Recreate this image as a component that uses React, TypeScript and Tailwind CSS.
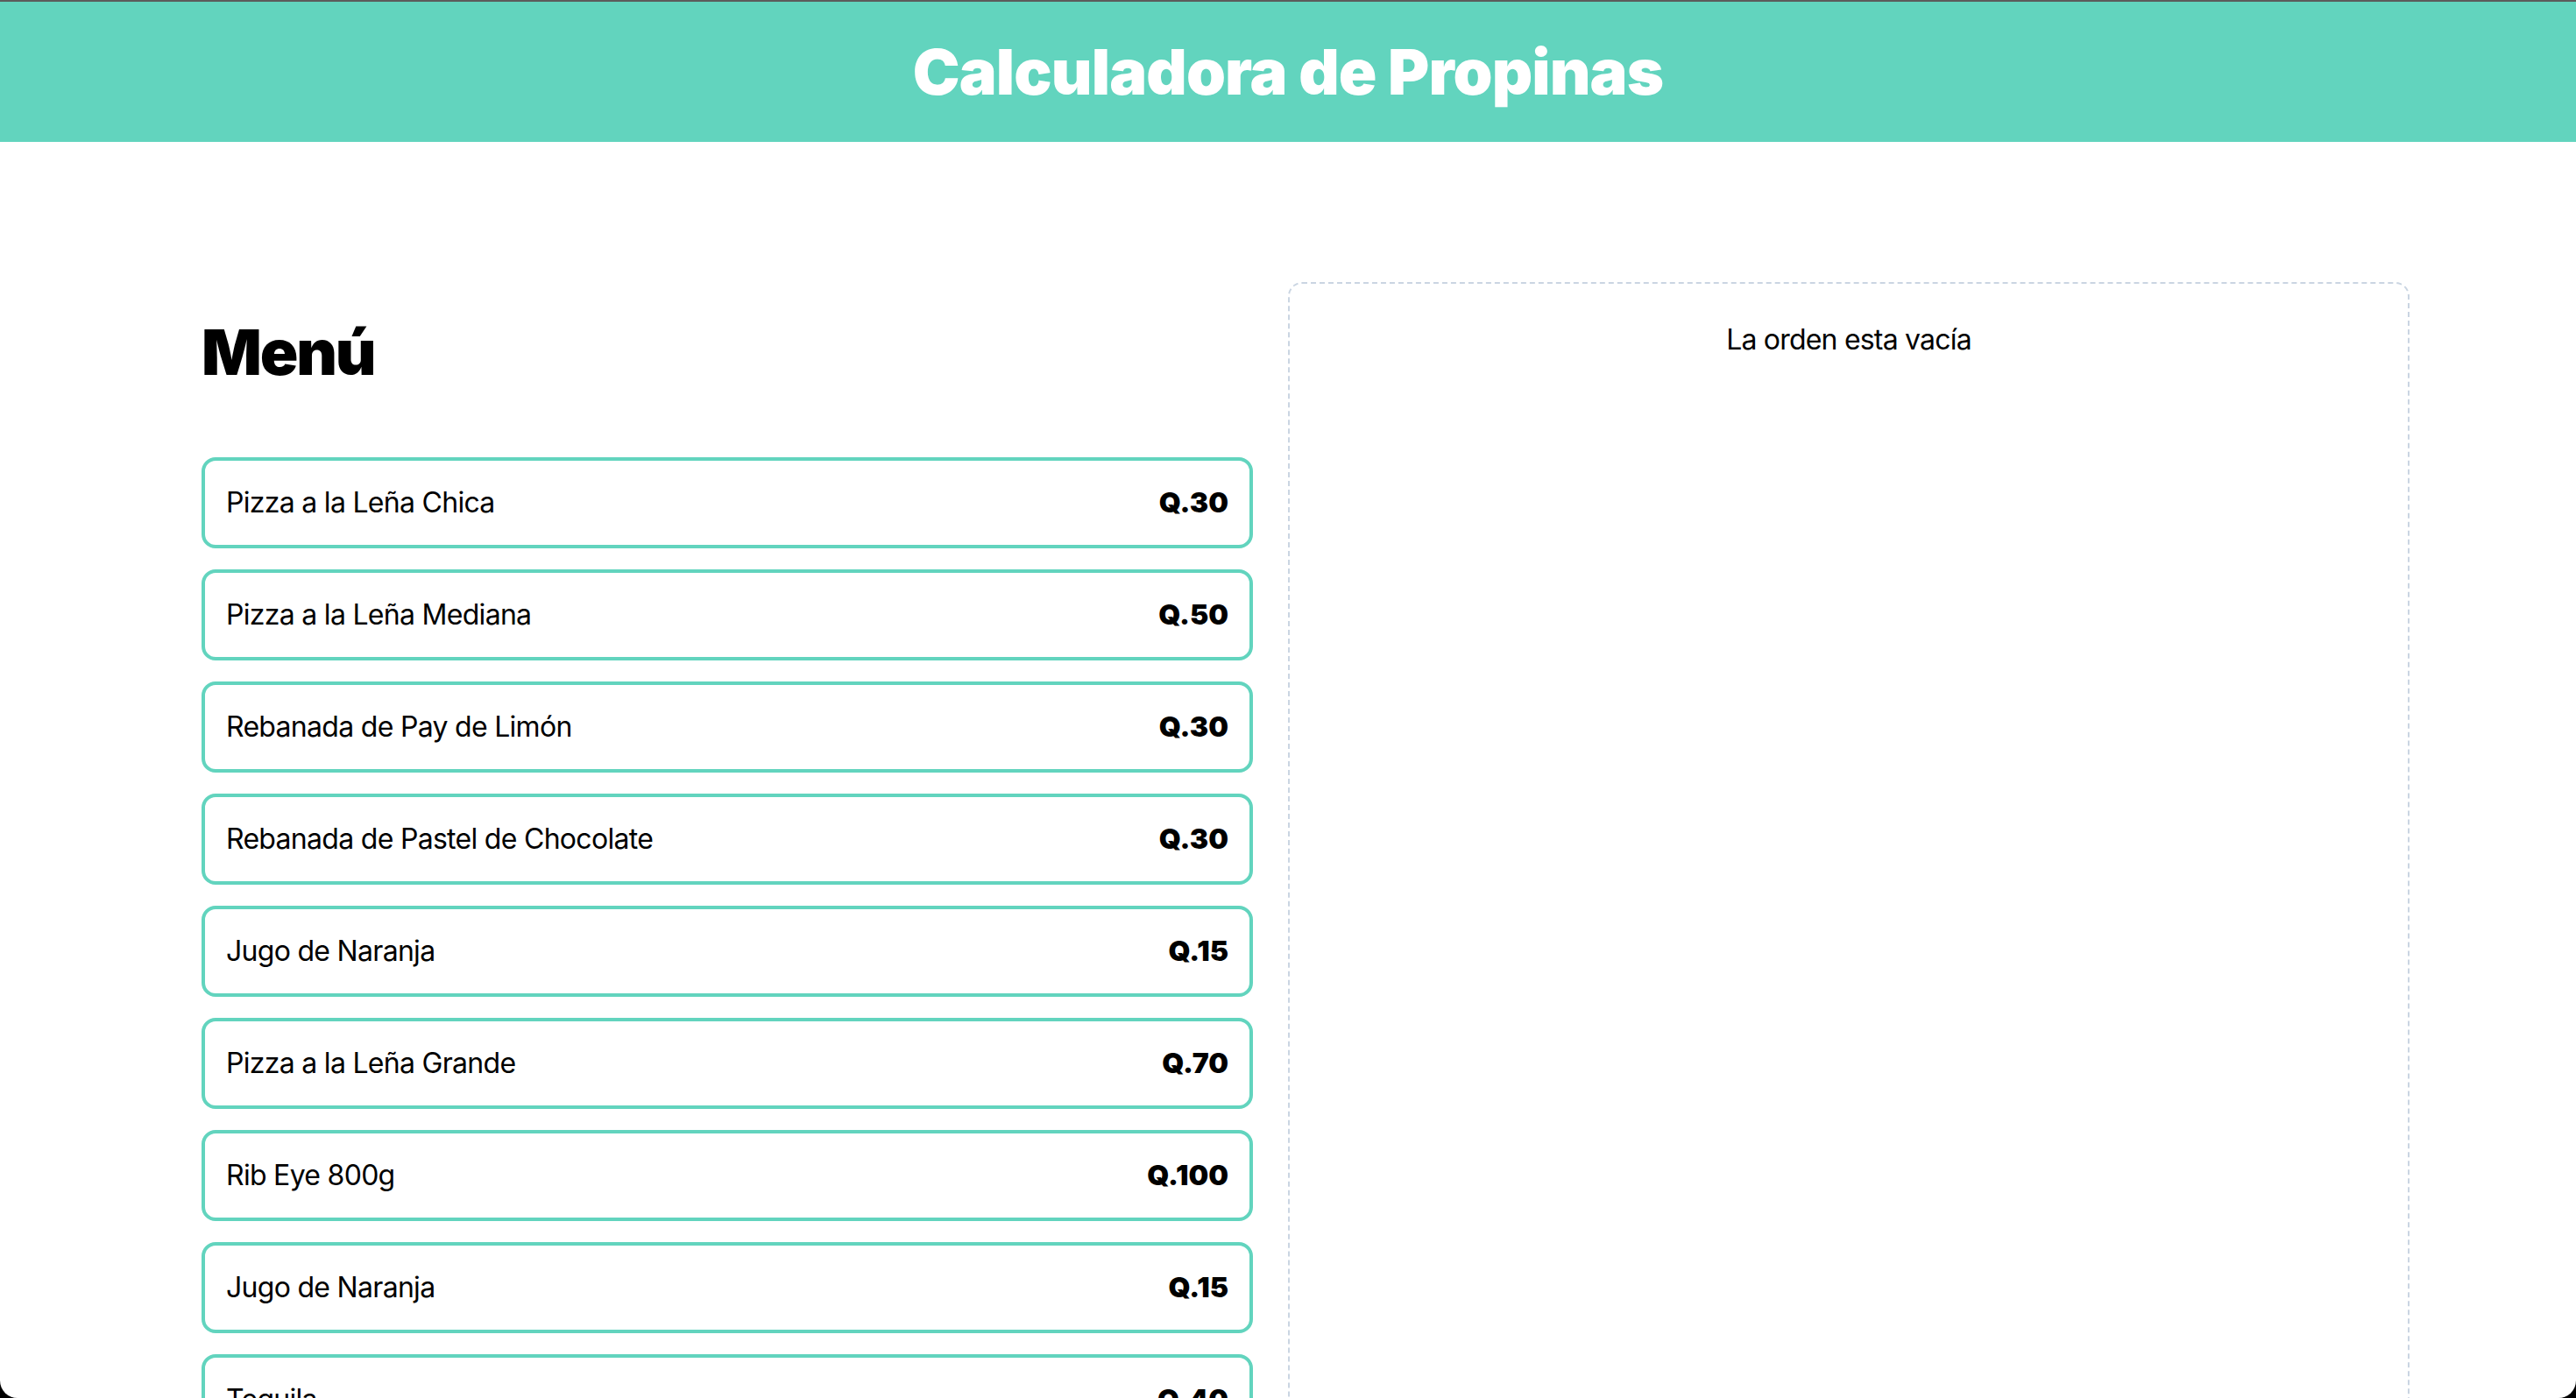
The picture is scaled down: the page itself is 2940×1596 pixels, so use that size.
const menuItems = [
  { id: 1, name: "Pizza a la Leña Chica", price: 30 },
  { id: 2, name: "Pizza a la Leña Mediana", price: 50 },
  { id: 3, name: "Rebanada de Pay de Limón", price: 30 },
  { id: 4, name: "Rebanada de Pastel de Chocolate", price: 30 },
  { id: 5, name: "Jugo de Naranja", price: 15 },
  { id: 6, name: "Pizza a la Leña Grande", price: 70 },
  { id: 7, name: "Rib Eye 800g", price: 100 },
  { id: 8, name: "Jugo de Naranja", price: 15 },
  { id: 9, name: "Tequila", price: 40 },
  { id: 10, name: "Cafe Latte", price: 20 },
];

function MenuItem({ name, price }: { name: string; price: number }) {
  return (
    <button className="w-full flex justify-between items-center border-4 border-[#62d4be] rounded-2xl p-6 text-[32px] leading-[48px] text-black hover:bg-[#e6f8f4]">
      <p className="tracking-[-0.022em]">{name}</p>
      <p className="font-black">Q.{price}</p>
    </button>
  );
}

export default function App() {
  return (
    <div className="h-[1596px] bg-black overflow-hidden">
      <div
        className="h-full bg-white rounded-b-[20px] overflow-hidden border-t-2 border-[#5c5c5c]"
        style={{ fontFamily: "Inter, 'Noto Sans', sans-serif" }}
      >
        {/* header */}
        <header className="bg-[#62d4be] py-10">
          <h1 className="text-center text-[72px] leading-[80px] font-black text-white tracking-[-0.012em]">
            Calculadora de Propinas
          </h1>
        </header>

        <main className="max-w-[2560px] mx-auto py-40 grid grid-cols-2">
          <div className="p-10">
            <h2 className="text-[72px] leading-[80px] font-black tracking-[-0.03em]">Menú</h2>
            <div className="mt-20 flex flex-col gap-6">
              {menuItems.map((item) => (
                <MenuItem key={item.id} name={item.name} price={item.price} />
              ))}
            </div>
          </div>

          {/* order panel */}
          <div className="border-2 border-dashed border-slate-300 rounded-2xl p-10">
            <p className="text-center text-[32px] leading-[48px] tracking-[-0.025em]">La orden esta vacía</p>
          </div>
        </main>
      </div>
    </div>
  );
}
